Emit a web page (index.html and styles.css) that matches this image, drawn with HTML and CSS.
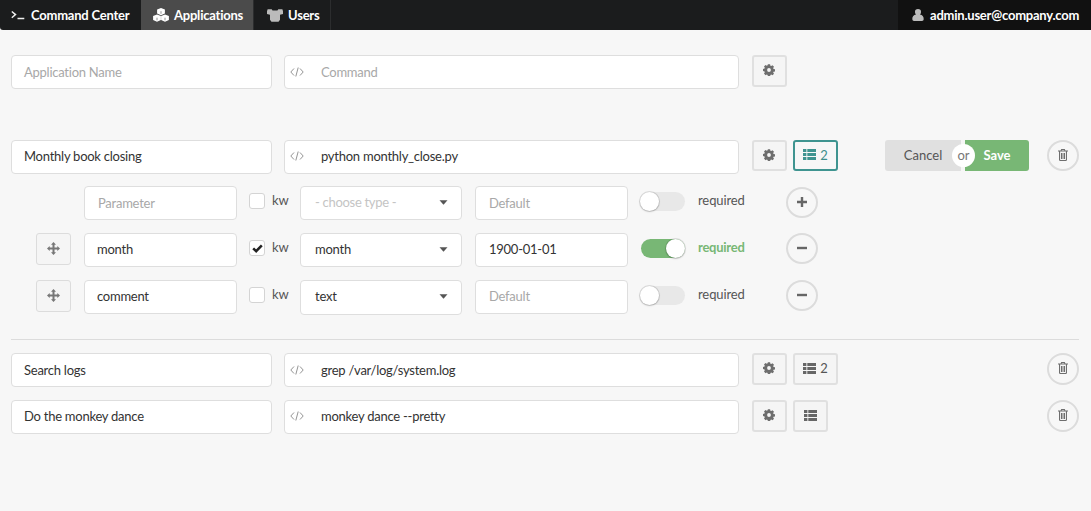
FILE: index.html
```html
<!DOCTYPE html>
<html lang="en">
<head>
<meta charset="utf-8">
<title>Applications</title>
<link rel="stylesheet" href="styles.css">
</head>
<body>
<svg class="defs" width="0" height="0" aria-hidden="true">
  <symbol id="i-gear" viewBox="0 0 12 12"><path fill-rule="evenodd" d="M4.900.2h2.200l.3 1.500.8.4 1.300-.8 1.500 1.500-.8 1.300.3.800 1.600.3v2.200l-1.600.3-.3.800.8 1.300-1.500 1.500-1.300-.8-.8.4-.3 1.500H4.900l-.3-1.500-.8-.4-1.300.8L1 9.600l.8-1.300-.3-.8L0 7.100V4.900l1.500-.3.3-.8L1 2.400 2.500.9l1.300.8.8-.4zM6 4.100a1.900 1.900 0 1 0 0 3.800 1.900 1.900 0 0 0 0-3.800z"/></symbol>
  <symbol id="i-list" viewBox="0 0 13 11"><path d="M0 0h3.400v3H0zM4.300 0H13v3H4.300zM0 4h3.400v3H0zM4.300 4H13v3H4.300zM0 8h3.400v3H0zM4.300 8H13v3H4.300z"/></symbol>
  <symbol id="i-trash" viewBox="0 0 10 12"><path fill-rule="evenodd" d="M3.200 0h3.600l.6 1.500H10v1.100H9v8.200c0 .7-.4 1.200-1 1.200H2c-.6 0-1-.5-1-1.200V2.600H0V1.500h2.600zM3.900 1l-.2.5h2.600L6.100 1zM2.100 2.600v8.200c0 .1.100.2.200.2h5.400c.1 0 .2-.1.200-.2V2.600zM3 4h1v6H3zM4.500 4h1v6h-1zM6 4h1v6H6z"/></symbol>
  <symbol id="i-move" viewBox="0 0 13 13"><path d="M6.500 0 9 2.700H7.500v2.800h2.800V4L13 6.500 10.300 9V7.500H7.500v2.800H9L6.500 13 4 10.300h1.500V7.500H2.700V9L0 6.500 2.700 4v1.500h2.800V2.700H4z"/></symbol>
  <symbol id="i-code" viewBox="0 0 14 10"><path d="M4 1.500.8 5 4 8.500M10 1.500 13.200 5 10 8.500M8.200.5 5.800 9.500" fill="none" stroke="currentColor" stroke-width=".9"/></symbol>
  <symbol id="i-caret" viewBox="0 0 8 5"><path d="M0 .3h8L4 4.700z"/></symbol>
  <symbol id="i-plus" viewBox="0 0 10 10"><path d="M3.800 0h2.400v3.800H10v2.400H6.200V10H3.800V6.200H0V3.800h3.800z"/></symbol>
  <symbol id="i-minus" viewBox="0 0 10 10"><path d="M0 3.800h10v2.400H0z"/></symbol>
</svg>

<nav class="topbar">
  <a class="tab tab-cc">
    <svg class="tab-icon-term" viewBox="0 0 14 10"><path d="M.8 1.500 4.500 4.600.8 7.700M6.500 8.600h6.800" fill="none" stroke="currentColor" stroke-width="1.500"/></svg>
    Command Center
  </a>
  <a class="tab tab-active tab-apps">
    <svg class="tab-icon" viewBox="0 0 16 14">
      <path d="M8 0l3.900 1.500v4L8 7.200 4.100 5.500v-4zM4 6.500l3.900 1.600v4L4 13.800.1 12.100v-4zM12 6.500l3.900 1.600v4L12 13.800l-3.900-1.700v-4z"/>
      <path d="M8 3.200v2.600M4 9.700v2.600M12 9.700v2.600" fill="none" stroke="#4b4b4b" stroke-width=".6"/>
    </svg>
    Applications
  </a>
  <a class="tab tab-users">
    <svg class="tab-icon tab-icon-muted" viewBox="0 0 15 13"><path d="M.6 1h3.800l.8 1.300h4.600L10.600 1h3.800l.6 2v2.600l-2.800.7v4.600l-1.400 2H4.200l-1.400-2V6.300L0 5.600V3z"/></svg>
    Users
  </a>
  <a class="tab-user">
    <svg class="user-icon" viewBox="0 0 12 12"><path d="M6 0a3 3 0 0 1 3 3.200 3 3 0 0 1-1 2.300c2.400.3 3.700 2 3.700 4.500 0 1.300-.7 2-1.700 2H2c-1 0-1.700-.7-1.700-2 0-2.500 1.300-4.200 3.700-4.500a3 3 0 0 1-1-2.300A3 3 0 0 1 6 0z"/></svg>
    admin.user@company.com
  </a>
</nav>

<main class="content">
  <div class="app-row app-new">
    <div class="field field-name"><span class="placeholder">Application Name</span></div>
    <div class="field field-cmd"><svg class="code-icon"><use href="#i-code"/></svg><span class="placeholder">Command</span></div>
    <button class="btn btn-gear"><svg class="ic-gear"><use href="#i-gear"/></svg></button>
  </div>

  <div class="app-row app-edit">
    <div class="field field-up field-name">Monthly book closing</div>
    <div class="field field-up field-cmd"><svg class="code-icon"><use href="#i-code"/></svg>python monthly_close.py</div>
    <button class="btn btn-gear"><svg class="ic-gear"><use href="#i-gear"/></svg></button>
    <button class="btn btn-params btn-teal"><svg class="ic-list"><use href="#i-list"/></svg>2</button>
    <div class="save-group">
      <button class="btn-cancel">Cancel</button>
      <span class="or">or</span>
      <button class="btn-save">Save</button>
    </div>
    <button class="btn-round btn-trash"><svg class="ic-trash"><use href="#i-trash"/></svg></button>
  </div>

  <div class="param-row param-first">
    <div class="field field-param field-ph"><span class="placeholder">Parameter</span></div>
    <span class="check"></span><span class="kw">kw</span>
    <div class="field field-up field-select"><span class="placeholder-light">- choose type -</span><svg class="ic-caret"><use href="#i-caret"/></svg></div>
    <div class="field field-default"><span class="placeholder">Default</span></div>
    <span class="toggle"><span class="knob"></span></span>
    <span class="req">required</span>
    <button class="btn-round btn-pm"><svg class="ic-pm"><use href="#i-plus"/></svg></button>
  </div>

  <div class="param-row param-handle">
    <button class="btn btn-move"><svg class="ic-move"><use href="#i-move"/></svg></button>
    <div class="field field-up field-param">month</div>
    <span class="check check-on"><svg viewBox="0 0 12 10"><path d="M1.200 4.800 4.500 8 10.800 1.500" fill="none" stroke="#222" stroke-width="2.800"/></svg></span><span class="kw">kw</span>
    <div class="field field-up field-select">month<svg class="ic-caret"><use href="#i-caret"/></svg></div>
    <div class="field field-up field-default">1900-01-01</div>
    <span class="toggle toggle-on"><span class="knob"></span></span>
    <span class="req req-on">required</span>
    <button class="btn-round btn-pm"><svg class="ic-pm"><use href="#i-minus"/></svg></button>
  </div>

  <div class="param-row param-handle param-last">
    <button class="btn btn-move"><svg class="ic-move"><use href="#i-move"/></svg></button>
    <div class="field field-up field-param">comment</div>
    <span class="check"></span><span class="kw">kw</span>
    <div class="field field-up field-select field-tall">text<svg class="ic-caret"><use href="#i-caret"/></svg></div>
    <div class="field field-up field-default"><span class="placeholder">Default</span></div>
    <span class="toggle"><span class="knob"></span></span>
    <span class="req">required</span>
    <button class="btn-round btn-pm"><svg class="ic-pm"><use href="#i-minus"/></svg></button>
  </div>

  <hr class="divider">

  <div class="app-row app-plain">
    <div class="field field-name">Search logs</div>
    <div class="field field-cmd"><svg class="code-icon"><use href="#i-code"/></svg>grep /var/log/system.log</div>
    <button class="btn btn-gear"><svg class="ic-gear"><use href="#i-gear"/></svg></button>
    <button class="btn btn-params"><svg class="ic-list"><use href="#i-list"/></svg>2</button>
    <button class="btn-round btn-trash"><svg class="ic-trash"><use href="#i-trash"/></svg></button>
  </div>

  <div class="app-row app-plain">
    <div class="field field-up field-name">Do the monkey dance</div>
    <div class="field field-up field-cmd"><svg class="code-icon"><use href="#i-code"/></svg>monkey dance --pretty</div>
    <button class="btn btn-gear"><svg class="ic-gear"><use href="#i-gear"/></svg></button>
    <button class="btn btn-params btn-empty"><svg class="ic-list"><use href="#i-list"/></svg></button>
    <button class="btn-round btn-trash"><svg class="ic-trash"><use href="#i-trash"/></svg></button>
  </div>
</main>
</body>
</html>
```
FILE: styles.css
```css
* { box-sizing: border-box; }
html, body { margin: 0; padding: 0; }
body {
  height: 511px;
  overflow: hidden;
  background: #f7f7f7;
  color: #333;
  font-family: Lato, "Liberation Sans", sans-serif;
  font-size: 13px;
}
.defs { position: absolute; }
button { font: inherit; color: inherit; padding: 0; margin: 0; }

.topbar {
  display: flex;
  height: 30px;
  background: #1b1c1d;
  color: #fff;
  font-weight: 700;
  font-size: 13px;
  letter-spacing: -0.22px;
  border-bottom-left-radius: 3px;
}
.tab {
  display: flex;
  align-items: center;
  border-right: 1px solid #2c2d2e;
}
.tab-cc { width: 141px; padding-left: 11px; border-right: 0; }
.tab-apps { width: 113px; padding-left: 12px; }
.tab-users { width: 77px; padding-left: 13px; }
.tab-active { background: #4b4b4b; }
.tab-icon-term { width: 14px; height: 10px; margin-right: 6px; color: #eee; }
.tab-icon { width: 16px; height: 14px; margin-right: 5px; fill: #fff; }
.tab-icon-muted { fill: #bbb; }
.tab-user {
  margin-left: auto;
  width: 193px;
  background: #111;
  display: flex;
  align-items: center;
  padding-left: 14px;
}
.user-icon { width: 12px; height: 12px; fill: #bbb; margin-right: 6px; }

.content { padding: 25px 12px 0 11px; }

.app-row { display: flex; align-items: flex-start; }
.app-new { margin-bottom: 51px; }
.app-edit { margin-bottom: 12px; }
.app-plain { margin-bottom: 13px; }

.field {
  display: flex;
  align-items: center;
  height: 34px;
  background: #fff;
  border: 1px solid #dedede;
  border-radius: 4px;
  padding-left: 12px;
  flex: none;
  letter-spacing: -0.25px;
}
.field-up { padding-bottom: 2px; }
.field-tall { height: 35px; padding-bottom: 3px; }
.placeholder { color: #a8a8a8; }
.placeholder-light { color: #c4c4c4; letter-spacing: -0.3px; }
.field-name { width: 261px; margin-right: 12px; }
.field-cmd { width: 455px; margin-right: 13px; padding-left: 5px; }
.code-icon { width: 14px; height: 10px; color: #888; margin-right: 17px; flex: none; }

.btn {
  display: inline-flex;
  align-items: center;
  justify-content: center;
  height: 32px;
  padding-bottom: 2px;
  background: #f5f5f5;
  border: 2px solid #e0e0e0;
  border-radius: 3px;
  flex: none;
}
.btn-gear { width: 35px; margin-right: 6px; padding-right: 1px; }
.btn-params { width: 45px; font-size: 13px; color: #555; }
.btn-empty { width: 35px; }
.btn-teal { border-color: #3f9490; color: #3f8f8c; background: #f7f7f7; }
.btn-teal .ic-list { fill: #3f9490; }
.app-edit .btn, .app-edit .btn-round { height: 31px; }
.ic-gear { width: 12px; height: 12px; fill: #6e6e6e; }
.ic-list { width: 13px; height: 11px; fill: #666; margin: 0 4px 0 0; }
.btn-empty .ic-list { margin: 0; }
.ic-trash { width: 10px; height: 12px; fill: #6e6e6e; }
.ic-move { width: 13px; height: 13px; fill: #777; }
.ic-caret { width: 9px; height: 5px; fill: #555; margin-left: auto; margin-right: 13px; }
.ic-pm { width: 10px; height: 10px; fill: #666; }

.save-group {
  display: flex;
  position: relative;
  margin-left: 47px;
  width: 144px;
  height: 31px;
  flex: none;
}
.btn-cancel {
  width: 76px;
  background: #e0e0e0;
  border: 0;
  border-radius: 3px 0 0 3px;
  color: #555;
  padding-bottom: 2px;
  text-align: center;
}
.btn-save {
  width: 64px;
  margin-left: 4px;
  background: #78b775;
  color: #fff;
  border: 0;
  border-radius: 0 3px 3px 0;
  padding-bottom: 2px;
  font-weight: 700;
}
.or {
  position: absolute;
  left: 67px;
  top: 4px;
  width: 23px;
  height: 23px;
  line-height: 23px;
  border-radius: 50%;
  background: #fff;
  color: #777;
  text-align: center;
}
.btn-round {
  width: 32px;
  height: 32px;
  padding-bottom: 2px;
  border-radius: 50%;
  background: #f7f7f7;
  border: 2px solid #dcdcdc;
  display: inline-flex;
  align-items: center;
  justify-content: center;
  flex: none;
}
.btn-trash { margin-left: auto; }
.app-edit .btn-trash { margin-left: 18px; }
.btn-pm { height: 31px; }

.param-row {
  display: flex;
  align-items: flex-start;
  padding-left: 73px;
  height: 34px;
  margin-bottom: 13px;
}
.param-first .btn-pm { margin-top: 1px; }
.param-handle { padding-left: 25px; }
.param-last { margin-bottom: 25px; }
.btn-move {
  width: 35px;
  height: 32px;
  margin-right: 13px;
  border-width: 1px;
  border-color: #dcdcdc;
}
.field-param { width: 153px; margin-right: 12px; }
.field-ph { padding-left: 13px; }
.check {
  width: 16px;
  height: 16px;
  margin-top: 7px;
  margin-right: 7px;
  background: #fff;
  border: 1px solid #d4d4d4;
  border-radius: 3px;
  flex: none;
  display: flex;
  align-items: center;
  justify-content: center;
}
.check-on svg { width: 11px; height: 9px; }
.kw { width: 28px; margin-top: 6px; color: #555; flex: none; letter-spacing: -0.1px; }
.field-select { width: 162px; margin-right: 13px; padding-left: 14px; }
.field-default { width: 153px; margin-right: 13px; padding-left: 13px; }
.toggle {
  width: 45px;
  height: 19px;
  margin-top: 6px;
  margin-right: 13px;
  margin-left: -1px;
  border-radius: 10px;
  background: #e8e8e8;
  display: flex;
  flex: none;
}
.knob {
  width: 19px;
  height: 19px;
  border-radius: 50%;
  background: #fff;
  box-shadow: 0 0 0 1px rgba(0, 0, 0, .12), 0 1px 2px rgba(0, 0, 0, .15);
}
.toggle-on { background: #78b775; justify-content: flex-end; margin-left: 0; width: 44px; }
.req { width: 88px; margin-top: 6px; color: #555; flex: none; letter-spacing: -0.1px; }
.req-on { color: #78b775; font-weight: 700; letter-spacing: -0.25px; }

.divider {
  border: 0;
  border-top: 1px solid #dcdcdc;
  margin: 0 0 13px;
}
```
